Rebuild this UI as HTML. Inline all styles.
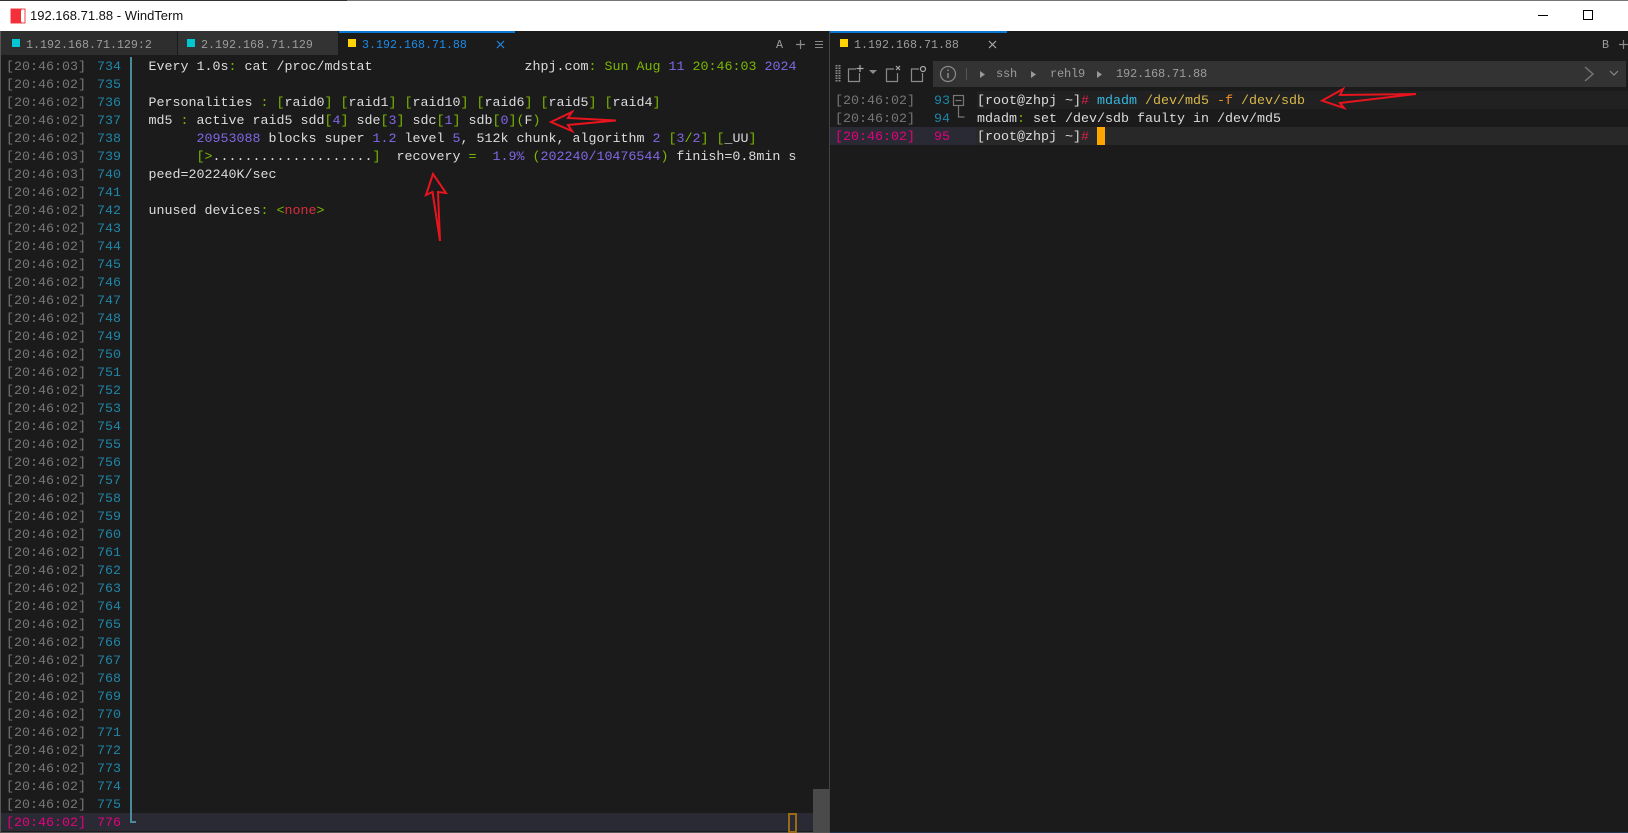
<!DOCTYPE html>
<html><head><meta charset="utf-8"><title>WindTerm</title>
<style>
html,body{margin:0;padding:0;width:1628px;height:833px;overflow:hidden;background:#1b1b1b}
div,pre,svg{position:absolute;margin:0}
pre,.m{font-family:"Liberation Mono",monospace;font-size:13.33px;line-height:18px;white-space:pre;color:#dcdcdc}
.t{font-family:"Liberation Mono",monospace;font-size:11.67px;line-height:16px;white-space:pre;color:#9c9c9c}
.g{color:#7ab800}.p{color:#8068e6}.r{color:#d8303a}.q{color:#e6007e}
.y{color:#d8b84a}.c{color:#35b8e0}.o{color:#f0902a}
</style></head><body>
<!-- title bar -->
<div style="left:0;top:0;width:1628px;height:31px;background:#fff"></div>
<div style="left:0;top:0;width:347px;height:1px;background:#333"></div>
<div style="left:347px;top:0;width:1281px;height:1px;background:#777"></div>
<svg style="left:9px;top:7px" width="18" height="18" viewBox="0 0 18 18"><rect x="2" y="2" width="14" height="14" fill="#fff" stroke="#f04048" stroke-width="1"/><path d="M2 2h11l-1 2v10l1 2H2z" fill="#f3303a"/></svg>
<div style="left:30px;top:6px;font:13px/20px 'Liberation Sans',sans-serif;color:#111;white-space:pre">192.168.71.88 - WindTerm</div>
<div style="left:1538px;top:15px;width:10px;height:1px;background:#000"></div>
<div style="left:1583px;top:10px;width:8px;height:8px;border:1px solid #000"></div>

<!-- left tab bar -->
<div style="left:1px;top:31px;width:176px;height:24px;background:#2e2e2e"></div>
<div style="left:178px;top:31px;width:160px;height:24px;background:#333"></div>
<div style="left:339px;top:31px;width:176px;height:2px;background:#0a78d2"></div>
<div style="left:12px;top:39px;width:8px;height:8px;background:#00c8d2"></div>
<div class="t" style="left:26px;top:37px">1.192.168.71.129:2</div>
<div style="left:187px;top:39px;width:8px;height:8px;background:#00c8d2"></div>
<div class="t" style="left:201px;top:37px">2.192.168.71.129</div>
<div style="left:348px;top:39px;width:8px;height:8px;background:#ffd400"></div>
<div class="t" style="left:362px;top:37px;color:#1e8ae6">3.192.168.71.88</div>
<svg style="left:496px;top:40px" width="9" height="9"><path d="M1 1l7 7M8 1l-7 7" stroke="#1e8ae6" stroke-width="1.2"/></svg>
<div class="t" style="left:776px;top:37px">A</div>
<svg style="left:796px;top:40px" width="9" height="9"><path d="M4.5 0v9M0 4.5h9" stroke="#888" stroke-width="1.2"/></svg>
<svg style="left:815px;top:41px" width="8" height="7"><path d="M0 .5h8M0 3.5h8M0 6.5h8" stroke="#888"/></svg>

<!-- divider, bottom -->
<div style="left:829px;top:31px;width:1px;height:801px;background:#444"></div>
<div style="left:0;top:832px;width:830px;height:1px;background:#555"></div>
<div style="left:830px;top:832px;width:798px;height:1px;background:#23364f"></div>
<div style="left:0;top:31px;width:1px;height:802px;background:#555"></div>

<!-- left pane -->
<div style="left:1px;top:813px;width:812px;height:18px;background:#2a2a35"></div>
<div style="left:813px;top:789px;width:16px;height:43px;background:#4a4a4a"></div>
<div style="left:130px;top:57px;width:2px;height:765px;background:#4a8a9a"></div>
<div style="left:130px;top:821px;width:6px;height:2px;background:#4a8a9a"></div>
<div style="left:788px;top:813px;width:5px;height:16px;border:2px solid #9a6a14"></div>
<pre style="left:6px;top:59px;color:#777">[20:46:03]
[20:46:02]
[20:46:02]
[20:46:02]
[20:46:02]
[20:46:03]
[20:46:03]
[20:46:02]
[20:46:02]
[20:46:02]
[20:46:02]
[20:46:02]
[20:46:02]
[20:46:02]
[20:46:02]
[20:46:02]
[20:46:02]
[20:46:02]
[20:46:02]
[20:46:02]
[20:46:02]
[20:46:02]
[20:46:02]
[20:46:02]
[20:46:02]
[20:46:02]
[20:46:02]
[20:46:02]
[20:46:02]
[20:46:02]
[20:46:02]
[20:46:02]
[20:46:02]
[20:46:02]
[20:46:02]
[20:46:02]
[20:46:02]
[20:46:02]
[20:46:02]
[20:46:02]
[20:46:02]
[20:46:02]
<span class="q">[20:46:02]</span></pre>
<pre style="left:97px;top:59px;color:#1f86a8">734
735
736
737
738
739
740
741
742
743
744
745
746
747
748
749
750
751
752
753
754
755
756
757
758
759
760
761
762
763
764
765
766
767
768
769
770
771
772
773
774
775
<span class="q">776</span></pre>
<pre style="left:148.5px;top:59px">Every 1.0s<span class="g">:</span> cat /proc/mdstat                <span style="position:absolute;left:376px">zhpj.com<span class="g">:</span> <span class="g">Sun Aug</span> <span class="p">11</span> <span class="g">20:46:03</span> <span class="p">2024</span></span>

Personalities <span class="g">:</span> <span class="g">[</span>raid0<span class="g">]</span> <span class="g">[</span>raid1<span class="g">]</span> <span class="g">[</span>raid10<span class="g">]</span> <span class="g">[</span>raid6<span class="g">]</span> <span class="g">[</span>raid5<span class="g">]</span> <span class="g">[</span>raid4<span class="g">]</span>
md5 <span class="g">:</span> active raid5 sdd<span class="g">[</span><span class="p">4</span><span class="g">]</span> sde<span class="g">[</span><span class="p">3</span><span class="g">]</span> sdc<span class="g">[</span><span class="p">1</span><span class="g">]</span> sdb<span class="g">[</span><span class="p">0</span><span class="g">]</span><span class="g">(</span>F<span class="g">)</span>
      <span class="p">20953088</span> blocks super <span class="p">1.2</span> level <span class="p">5</span>, 512k chunk, algorithm <span class="p">2</span> <span class="g">[</span><span class="p">3</span><span class="g">/</span><span class="p">2</span><span class="g">]</span> <span class="g">[</span>_UU<span class="g">]</span>
      <span class="g">[&gt;</span>....................<span class="g">]</span>  recovery <span class="g">=</span>  <span class="p">1.9%</span> <span class="g">(</span><span class="p">202240/10476544</span><span class="g">)</span> finish=0.8min s
peed=202240K/sec

unused devices<span class="g">:</span> <span class="g">&lt;</span><span class="r">none</span><span class="g">&gt;</span></pre>

<!-- right tab bar -->
<div style="left:830px;top:31px;width:177px;height:2px;background:#0a78d2"></div>
<div style="left:840px;top:39px;width:8px;height:8px;background:#ffd400"></div>
<div class="t" style="left:854px;top:37px">1.192.168.71.88</div>
<svg style="left:988px;top:40px" width="9" height="9"><path d="M1 1l7 7M8 1l-7 7" stroke="#aaa" stroke-width="1.2"/></svg>
<div class="t" style="left:1602px;top:37px">B</div>
<svg style="left:1619px;top:40px" width="9" height="9"><path d="M4.5 0v9M0 4.5h9" stroke="#888" stroke-width="1.2"/></svg>

<!-- toolbar -->
<div style="left:933px;top:61px;width:693px;height:26px;background:#333"></div>
<svg style="left:834px;top:60px" width="130" height="28" fill="none" stroke="#8a8a8a" stroke-width="1.2">
<path d="M2.5 5v17M5.5 5v17" stroke-dasharray="1.5 1" stroke-width="2"/>
<path d="M22 9h-7.500v12.500h11V13"/><path d="M26 5v7M22.500 8.500h7" stroke="#aaa"/>
<path d="M35 10l8 0l-4 4z" fill="#8a8a8a" stroke="none"/>
<path d="M60 9h-7.500v12.500h11V13"/><path d="M62 6l4 4M66 6l-4 4" stroke="#aaa"/>
<path d="M85 9h-7.500v12.500h11V13"/><circle cx="89" cy="9" r="2.500" stroke="#aaa"/>
<circle cx="114" cy="14" r="7.500"/><path d="M114 13v5M114 9.500v1.500" stroke-width="1.500"/>
</svg>
<div style="left:966px;top:68px;width:1px;height:12px;background:#555"></div>
<svg style="left:980px;top:71px" width="5" height="7"><path d="M0 0l5 3.500L0 7z" fill="#999"/></svg>
<div class="t" style="left:996px;top:66px;font-size:12px;letter-spacing:-.2px">ssh</div>
<svg style="left:1031px;top:71px" width="5" height="7"><path d="M0 0l5 3.500L0 7z" fill="#999"/></svg>
<div class="t" style="left:1050px;top:66px;font-size:12px;letter-spacing:-.2px">rehl9</div>
<svg style="left:1097px;top:71px" width="5" height="7"><path d="M0 0l5 3.500L0 7z" fill="#999"/></svg>
<div class="t" style="left:1116px;top:66px;font-size:12px;letter-spacing:-.2px">192.168.71.88</div>
<svg style="left:1583px;top:65px" width="12" height="18" fill="none" stroke="#777" stroke-width="1.4"><path d="M2 2l8 7-8 7"/></svg>
<svg style="left:1609px;top:70px" width="10" height="7" fill="none" stroke="#888" stroke-width="1.200"><path d="M1 1l4 4 4-4"/></svg>

<!-- right pane -->
<div style="left:977px;top:91px;width:651px;height:18px;background:#212121"></div>
<div style="left:830px;top:127px;width:146px;height:18px;background:#2a2a35"></div>
<div style="left:976px;top:127px;width:652px;height:18px;background:#282828"></div>
<pre style="left:835px;top:93px;color:#777">[20:46:02]
[20:46:02]
<span class="q">[20:46:02]</span></pre>
<pre style="left:934px;top:93px;color:#1f86a8">93
94
<span class="q">95</span></pre>
<svg style="left:952px;top:93px" width="16" height="28" fill="none" stroke="#777" stroke-width="1.2"><rect x="1.500" y="2.500" width="10" height="10"/><path d="M3.500 7.500h6M6.500 12.500v11.500h6"/></svg>
<pre style="left:977px;top:93px">[root@zhpj ~]<span style="color:#e0204a">#</span> <span class="c">mdadm</span> <span class="y">/dev/md5</span> <span class="o">-f</span> <span class="y">/dev/sdb</span>
mdadm<span class="g">:</span> set /dev/sdb faulty in /dev/md5
[root@zhpj ~]<span style="color:#e0204a">#</span></pre>
<div style="left:1097px;top:127px;width:8px;height:18px;background:#ffa500"></div>

<!-- arrows -->
<svg style="left:0;top:0" width="1628" height="833" fill="none" stroke="#e8141e" stroke-width="2" stroke-linejoin="miter">
<path d="M551 122L572 112L568 118L616 120.500L568 125L572 131Z"/>
<path d="M433 174L426 195L432.500 192L440 241L438 192L446 193Z"/>
<path d="M1322 100.700L1343 89L1340 95L1416 94L1340 103L1344 108Z"/>
</svg>
</body></html>
